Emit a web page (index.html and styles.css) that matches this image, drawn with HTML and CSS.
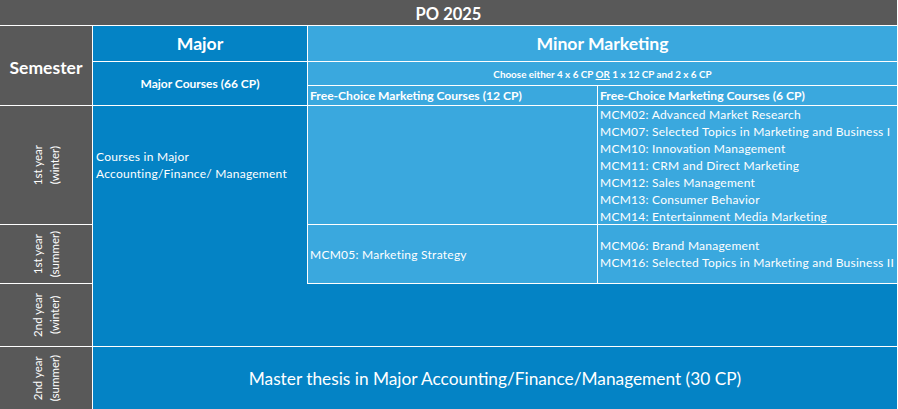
FILE: index.html
```html
<!DOCTYPE html>
<html lang="en">
<head>
<meta charset="utf-8">
<title>PO 2025</title>
<link rel="stylesheet" href="styles.css">
</head>
<body>
<div class="table">
  <div class="cell grey title">PO 2025</div>
  <div class="cell grey sem-head">Semester</div>
  <div class="cell dark major-head">Major</div>
  <div class="cell light minor-head">Minor Marketing</div>
  <div class="cell dark major-courses">Major Courses (66 CP)</div>
  <div class="cell light choose"><span>Choose either 4 x 6 CP <u>OR</u> 1 x 12 CP and 2 x 6 CP</span></div>
  <div class="cell light fc fc12">Free-Choice Marketing Courses (12 CP)</div>
  <div class="cell light fc fc6">Free-Choice Marketing Courses (6 CP)</div>

  <div class="cell grey sem s1"><span>1st year<br>(winter)</span></div>
  <div class="cell grey sem s2"><span>1st year<br>(summer)</span></div>
  <div class="cell grey sem s3"><span>2nd year<br>(winter)</span></div>
  <div class="cell grey sem s4"><span>2nd year<br>(summer)</span></div>

  <div class="block dark">
    <div class="major-text"><p>Courses in Major<br>Accounting/Finance/ Management</p></div>
    <div class="minor-area">
      <div class="minor-grid">
        <div class="lb"></div>
        <div class="lb list">
          <p>MCM02: Advanced Market Research</p>
          <p>MCM07: Selected Topics in Marketing and Business I</p>
          <p>MCM10: Innovation Management</p>
          <p>MCM11: CRM and Direct Marketing</p>
          <p>MCM12: Sales Management</p>
          <p>MCM13: Consumer Behavior</p>
          <p>MCM14: Entertainment Media Marketing</p>
        </div>
        <div class="lb list"><p>MCM05: Marketing Strategy</p></div>
        <div class="lb list">
          <p>MCM06: Brand Management</p>
          <p>MCM16: Selected Topics in Marketing and Business II</p>
        </div>
      </div>
    </div>
  </div>

  <div class="cell dark thesis">Master thesis in Major Accounting/Finance/Management (30 CP)</div>
</div>
</body>
</html>
```

FILE: styles.css
```css
html, body {
  margin: 0;
  padding: 0;
  background: #ffffff;
}

.table {
  width: 898px;
  height: 409px;
  box-sizing: border-box;
  padding-right: 1px;
  background: #ffffff;
  display: grid;
  grid-template-columns: 92px 214px 289px 299px;
  grid-template-rows: 25px 35px 23px 19px 118px 58px 62px 62px;
  gap: 1px;
  font-family: "Lato", "Liberation Sans", sans-serif;
  color: #ffffff;
}

.cell {
  display: flex;
  align-items: center;
  justify-content: center;
  white-space: nowrap;
  overflow: hidden;
}

.grey { background: #595959; }
.dark { background: #0483c5; }
.light { background: #3aa8de; }

.title {
  grid-column: 1 / -1;
  grid-row: 1;
  font-weight: 700;
  font-size: 16.5px;
  padding-top: 3px;
}

.sem-head {
  grid-column: 1;
  grid-row: 2 / 5;
  font-weight: 700;
  font-size: 17.5px;
  padding-top: 3px;
}

.major-head {
  grid-column: 2;
  grid-row: 2;
  font-weight: 700;
  font-size: 17.6px;
}

.minor-head {
  grid-column: 3 / 5;
  grid-row: 2;
  font-weight: 700;
  font-size: 17.6px;
}

.major-courses {
  grid-column: 2;
  grid-row: 3 / 5;
  font-weight: 700;
  font-size: 12px;
}

.choose {
  grid-column: 3 / 5;
  grid-row: 3;
  font-weight: 700;
  font-size: 9.9px;
}

.choose u {
  text-underline-offset: 1px;
}

.fc {
  justify-content: flex-start;
  padding-left: 2px;
  font-weight: 700;
  font-size: 12.1px;
}

.fc12 { grid-column: 3; grid-row: 4; }
.fc6 { grid-column: 4; grid-row: 4; }

.sem {
  grid-column: 1;
  font-size: 11.5px;
  line-height: 17px;
}

.sem span {
  writing-mode: vertical-rl;
  transform: rotate(180deg);
  text-align: center;
}

.s1 { grid-row: 5; }
.s2 { grid-row: 6; }
.s3 { grid-row: 7; }
.s4 { grid-row: 8; }

.block {
  grid-column: 2 / 5;
  grid-row: 5 / 8;
  display: flex;
  align-items: flex-start;
}

.major-text {
  width: 214px;
  height: 118px;
  box-sizing: border-box;
  padding-left: 3px;
  display: flex;
  align-items: center;
  font-size: 12px;
  letter-spacing: 0.25px;
  line-height: 17px;
}

.major-text p,
.list p {
  margin: 0;
  white-space: nowrap;
}

.minor-area {
  flex: 1;
}

.minor-grid {
  display: grid;
  grid-template-columns: 289px 299px;
  grid-template-rows: 118px 58px;
  gap: 1px;
  padding: 0 0 1px 1px;
  background: #ffffff;
}

.lb {
  background: #3aa8de;
  overflow: hidden;
}

.list {
  display: flex;
  flex-direction: column;
  justify-content: center;
  padding-left: 2px;
  font-size: 12px;
  letter-spacing: 0.25px;
  line-height: 17px;
}

.thesis {
  grid-column: 2 / 5;
  grid-row: 8;
  font-size: 17.3px;
  padding-top: 1px;
}
```
